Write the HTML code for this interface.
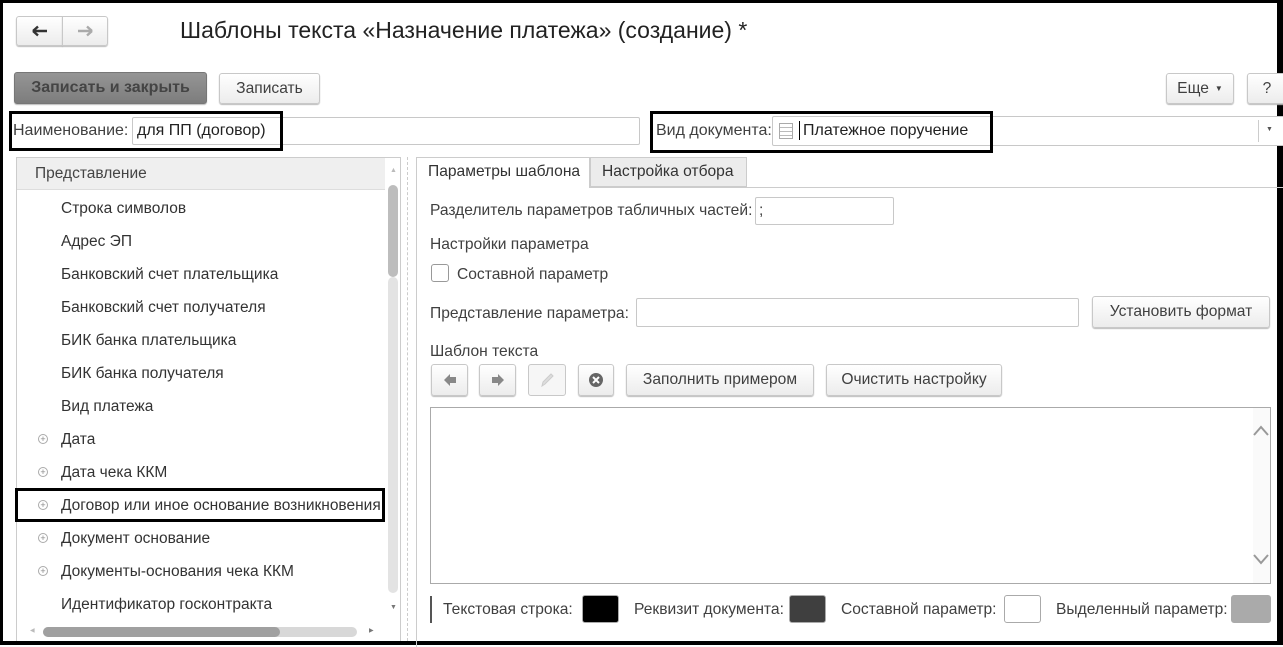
<!DOCTYPE html>
<html><head><meta charset="utf-8"><style>
*{box-sizing:border-box;margin:0;padding:0}
body{width:1283px;height:645px;position:relative;overflow:hidden;background:#fff;font-family:"Liberation Sans",Arial,sans-serif;font-size:15.6px;color:#404040}
.a{position:absolute;white-space:nowrap}
.btn{position:absolute;border:1px solid #c8c8c8;border-radius:3px;background:linear-gradient(#fff,#ececec);box-shadow:0 1px 1px #bbb;display:flex;align-items:center;justify-content:center;color:#404040;white-space:nowrap}
.inp{position:absolute;border:1px solid #c8c8c8;border-radius:2px;background:#fff}
.bx{position:absolute;border:3px solid #000}
.row{position:absolute;left:61px;font-size:15.5px;color:#333;white-space:nowrap}
.pl{position:absolute;left:38px;width:10px;height:10px;border:1px solid #aaa;border-radius:50%;font-size:9px;line-height:8px;text-align:center;color:#888}
.sw{position:absolute;top:595px;width:37px;height:28px;border:1px solid #aaa;border-radius:3px}
</style></head><body>
<div class="a" style="left:0;top:0;width:1283px;height:645px;border:3px solid #000;border-right-width:6px;border-bottom-width:4px"></div>

<div class="btn" style="left:16px;top:16px;width:47px;height:30px;border-radius:3px 0 0 3px"><svg width="16" height="12"><path d="M1 6H15M1 6L6 1.5M1 6L6 10.5" stroke="#333" stroke-width="2.4" fill="none"/></svg></div>
<div class="btn" style="left:62px;top:16px;width:46px;height:30px;border-radius:0 3px 3px 0"><svg width="16" height="12"><path d="M1 6H15M15 6L10 1.5M15 6L10 10.5" stroke="#aaa" stroke-width="2.4" fill="none"/></svg></div>
<div class="a" style="left:180px;top:17px;font-size:23px;color:#222">Шаблоны текста «Назначение платежа» (создание) *</div>

<div class="btn" style="left:14px;top:72px;width:193px;height:32px;background:linear-gradient(#959595,#7d7d7d);border-color:#777;font-weight:bold;color:#444;font-size:16px">Записать и закрыть</div>
<div class="btn" style="left:219px;top:73px;width:101px;height:31px">Записать</div>
<div class="btn" style="left:1166px;top:73px;width:68px;height:31px">Еще <span style="font-size:8px;margin-left:6px">&#9660;</span></div>
<div class="btn" style="left:1247px;top:73px;width:40px;height:31px">?</div>

<div class="a" style="left:13px;top:122px;font-size:16px">Наименование:</div>
<div class="inp" style="left:132px;top:117px;width:508px;height:28px"></div>
<div class="a" style="left:137px;top:122px;color:#222;font-size:16px">для ПП (договор)</div>
<div class="bx" style="left:9px;top:111px;width:274px;height:40px"></div>

<div class="a" style="left:656px;top:122px;font-size:16px">Вид документа:</div>
<div class="inp" style="left:772px;top:116px;width:515px;height:30px"></div>
<div class="a" style="left:779px;top:123px;width:14px;height:16px;border:1px solid #aaa;background:repeating-linear-gradient(#fff 0 3px,#bbb 3px 4px)"></div>
<div class="a" style="left:799px;top:121px;width:1px;height:19px;background:#000"></div>
<div class="a" style="left:803px;top:122px;color:#222;font-size:16px">Платежное поручение</div>
<div class="a" style="left:1258px;top:120px;width:1px;height:22px;background:#ccc"></div>
<div class="a" style="left:1266px;top:126px;font-size:7px;color:#555">&#9660;</div>
<div class="bx" style="left:650px;top:111px;width:343px;height:42px"></div>

<div class="a" style="left:16px;top:157px;width:385px;height:484px;border:1px solid #ccc;border-bottom:none"></div>
<div class="a" style="left:17px;top:158px;width:368px;height:32px;background:#efefef;border-bottom:1px solid #ddd"></div>
<div class="a" style="left:35px;top:165px;font-size:15.5px;color:#444">Представление</div>
<div class="a" style="left:390px;top:167px;font-size:7px;color:#bbb">&#9650;</div>
<div class="a" style="left:388px;top:185px;width:10px;height:92px;border-radius:5px;background:#bdbdbd"></div>
<div class="a" style="left:388px;top:277px;width:10px;height:316px;border-radius:5px;background:#e3e3e3"></div>
<div class="a" style="left:390px;top:604px;font-size:7px;color:#777">&#9660;</div>
<div class="row" style="top:200px">Строка символов</div>
<div class="row" style="top:233px">Адрес ЭП</div>
<div class="row" style="top:266px">Банковский счет плательщика</div>
<div class="row" style="top:299px">Банковский счет получателя</div>
<div class="row" style="top:332px">БИК банка плательщика</div>
<div class="row" style="top:365px">БИК банка получателя</div>
<div class="row" style="top:398px">Вид платежа</div>
<div class="pl" style="top:434px">+</div><div class="row" style="top:431px">Дата</div>
<div class="pl" style="top:467px">+</div><div class="row" style="top:464px">Дата чека ККМ</div>
<div class="pl" style="top:500px">+</div><div class="row" style="top:497px">Договор или иное основание возникновения</div>
<div class="pl" style="top:533px">+</div><div class="row" style="top:530px">Документ основание</div>
<div class="pl" style="top:566px">+</div><div class="row" style="top:563px">Документы-основания чека ККМ</div>
<div class="row" style="top:596px">Идентификатор госконтракта</div>
<div class="bx" style="left:15px;top:488px;width:370px;height:34px"></div>
<div class="a" style="left:30px;top:627px;font-size:6px;color:#bbb">&#9664;</div>
<div class="a" style="left:43px;top:627px;width:314px;height:10px;border-radius:5px;background:#d8d8d8"></div>
<div class="a" style="left:43px;top:627px;width:237px;height:10px;border-radius:5px;background:#a0a0a0"></div>
<div class="a" style="left:369px;top:627px;font-size:6px;color:#777">&#9654;</div>
<div class="a" style="left:407px;top:157px;height:484px;border-left:1px dashed #ccc"></div>

<div class="a" style="left:416px;top:187px;width:870px;height:460px;border-left:1px solid #ccc;border-top:1px solid #ccc"></div>
<div class="a" style="left:416px;top:157px;width:174px;height:31px;border:1px solid #ccc;border-bottom:none;background:#fff;padding:5px 0 0 11px;color:#333">Параметры шаблона</div>
<div class="a" style="left:590px;top:157px;width:157px;height:30px;border:1px solid #ccc;background:#ececec;padding:5px 0 0 11px;color:#333">Настройка отбора</div>

<div class="a" style="left:430px;top:202px">Разделитель параметров табличных частей:</div>
<div class="inp" style="left:755px;top:197px;width:139px;height:28px"></div>
<div class="a" style="left:759px;top:202px">;</div>
<div class="a" style="left:430px;top:236px">Настройки параметра</div>
<div class="a" style="left:431px;top:264px;width:18px;height:18px;border:1px solid #999;border-radius:3px"></div>
<div class="a" style="left:457px;top:266px">Составной параметр</div>
<div class="a" style="left:430px;top:305px">Представление параметра:</div>
<div class="inp" style="left:636px;top:298px;width:443px;height:29px"></div>
<div class="btn" style="left:1092px;top:296px;width:178px;height:32px">Установить формат</div>
<div class="a" style="left:430px;top:343px">Шаблон текста</div>
<div class="btn" style="left:431px;top:364px;width:37px;height:32px"><svg width="14" height="14"><path d="M1 7L7 1V4H13V10H7V13Z" fill="#888"/></svg></div>
<div class="btn" style="left:479px;top:364px;width:37px;height:32px"><svg width="14" height="14"><path d="M13 7L7 1V4H1V10H7V13Z" fill="#888"/></svg></div>
<div class="btn" style="left:528px;top:364px;width:38px;height:32px;background:#f6f6f6;box-shadow:none"><svg width="16" height="16"><path d="M3 14 L4 10 L12 2 L14 4 L6 12 Z" fill="#ddd" stroke="#ccc"/></svg></div>
<div class="btn" style="left:578px;top:364px;width:36px;height:32px"><svg width="16" height="16"><circle cx="8" cy="8" r="7" fill="#666"/><path d="M5 5L11 11M11 5L5 11" stroke="#fff" stroke-width="2"/></svg></div>
<div class="btn" style="left:626px;top:364px;width:188px;height:32px">Заполнить примером</div>
<div class="btn" style="left:826px;top:364px;width:176px;height:32px">Очистить настройку</div>

<div class="a" style="left:430px;top:407px;width:841px;height:177px;border:1px solid #aaa"></div>
<div class="a" style="left:1253px;top:408px;width:17px;height:175px;background:#fafafa"></div>
<svg class="a" style="left:1252px;top:425px" width="18" height="12"><path d="M2 10 L9 2 L16 10" fill="none" stroke="#999" stroke-width="2"/></svg>
<svg class="a" style="left:1252px;top:553px" width="18" height="12"><path d="M2 2 L9 10 L16 2" fill="none" stroke="#999" stroke-width="2"/></svg>

<div class="a" style="left:430px;top:596px;width:2px;height:27px;background:#555"></div>
<div class="a" style="left:443px;top:601px">Текстовая строка:</div>
<div class="sw" style="left:582px;background:#000"></div>
<div class="a" style="left:634px;top:601px">Реквизит документа:</div>
<div class="sw" style="left:789px;background:#3f3f3f"></div>
<div class="a" style="left:841px;top:601px">Составной параметр:</div>
<div class="sw" style="left:1004px;background:#fff"></div>
<div class="a" style="left:1056px;top:601px">Выделенный параметр:</div>
<div class="sw" style="left:1231px;width:40px;background:#aaa"></div>
</body></html>
